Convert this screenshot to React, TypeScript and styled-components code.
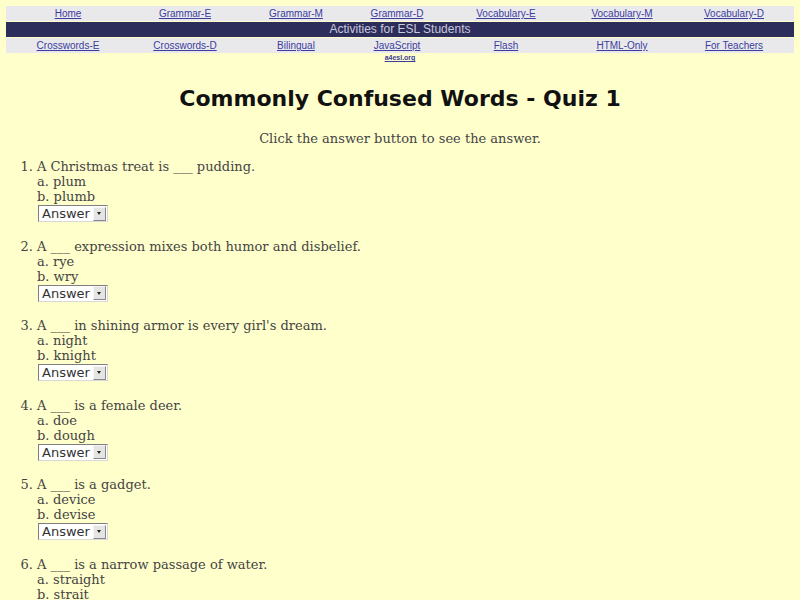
import styled, { createGlobalStyle } from 'styled-components';

const GlobalStyle = createGlobalStyle`
  html, body {
    margin: 0;
    padding: 0;
    background: #ffffcc;
  }
`;

const Page = styled.div`
  padding: 6px 6px 0;
  font-family: "DejaVu Serif", serif;
  color: #444;
`;

const NavTable = styled.div`
  display: grid;
  gap: 1px;
`;

const NavRow = styled.div`
  display: grid;
  grid-template-columns: 124fr 110fr 112fr 90fr 128fr 104fr 120fr;
  height: 15px;
  align-items: center;
  background: #e9e9ec;
`;

const Banner = styled.div`
  height: 15px;
  background: #2d2d5c;
  color: #c9c9dc;
  font-family: "Liberation Sans", Arial, sans-serif;
  font-size: 12px;
  line-height: 15px;
  text-align: center;
`;

const NavLink = styled.a`
  font-family: "Liberation Sans", Arial, sans-serif;
  font-size: 10px;
  color: #3c3c9c;
  text-decoration: underline;
  text-align: center;
`;

const SiteLink = styled.a`
  display: block;
  margin-top: 1px;
  font-family: "Liberation Sans", Arial, sans-serif;
  font-size: 7px;
  font-weight: bold;
  color: #3c3c9c;
  text-decoration: underline;
  text-align: center;
`;

const Title = styled.h1`
  margin: 23px 0 0;
  font-family: "Comic Sans MS", "DejaVu Sans", sans-serif;
  font-size: 22px;
  line-height: 30px;
  font-weight: bold;
  color: #111;
  text-align: center;
`;

const Intro = styled.p`
  margin: 17px 0 0;
  font-size: 13px;
  line-height: 15px;
  text-align: center;
`;

const QuizList = styled.ol`
  margin: 13px 0 0;
  padding-left: 31px;
  font-size: 13px;
  line-height: 15px;
`;

const Question = styled.li`
  margin-bottom: 16.6px;
`;

const Option = styled.div``;

const AnswerBox = styled.div`
  display: flex;
  width: fit-content;
  align-items: center;
  box-sizing: border-box;
  margin: 1px 0 0 1px;
  height: 17px;
  padding: 0 1px 0 3px;
  border: 1px solid;
  border-color: #7e7e7e #d8d8d8 #d8d8d8 #7e7e7e;
  background: #ffffff;
  font-family: "DejaVu Sans", sans-serif;
  font-size: 13px;
  color: #333;
`;

const Arrow = styled.span`
  display: inline-flex;
  align-items: center;
  justify-content: center;
  box-sizing: border-box;
  width: 13px;
  height: 14px;
  margin-left: 3px;
  background: #e4e4e4;
  border: 1px solid;
  border-color: #f6f6f6 #888 #888 #f6f6f6;

  &::after {
    content: '';
    border-left: 2px solid transparent;
    border-right: 2px solid transparent;
    border-top: 3px solid #222;
  }
`;

const topLinks = ['Home', 'Grammar-E', 'Grammar-M', 'Grammar-D', 'Vocabulary-E', 'Vocabulary-M', 'Vocabulary-D'];
const bottomLinks = ['Crosswords-E', 'Crosswords-D', 'Bilingual', 'JavaScript', 'Flash', 'HTML-Only', 'For Teachers'];

const questions = [
  { q: 'A Christmas treat is ___ pudding.', a: 'plum', b: 'plumb' },
  { q: 'A ___ expression mixes both humor and disbelief.', a: 'rye', b: 'wry' },
  { q: "A ___ in shining armor is every girl's dream.", a: 'night', b: 'knight' },
  { q: 'A ___ is a female deer.', a: 'doe', b: 'dough' },
  { q: 'A ___ is a gadget.', a: 'device', b: 'devise' },
  { q: 'A ___ is a narrow passage of water.', a: 'straight', b: 'strait' },
];

export default function App() {
  return (
    <>
      <GlobalStyle />
      <Page>
        <NavTable>
          <NavRow>
            {topLinks.map((l) => (
              <NavLink key={l} href="#">{l}</NavLink>
            ))}
          </NavRow>
          <Banner>Activities for ESL Students</Banner>
          <NavRow>
            {bottomLinks.map((l) => (
              <NavLink key={l} href="#">{l}</NavLink>
            ))}
          </NavRow>
        </NavTable>
        <SiteLink href="#">a4esl.org</SiteLink>

        <Title>Commonly Confused Words - Quiz 1</Title>
        <Intro>Click the answer button to see the answer.</Intro>

        <QuizList>
          {questions.map((item) => (
            <Question key={item.q}>
              {item.q}
              <Option>a. {item.a}</Option>
              <Option>b. {item.b}</Option>
              <AnswerBox>
                Answer
                <Arrow />
              </AnswerBox>
            </Question>
          ))}
        </QuizList>
      </Page>
    </>
  );
}
